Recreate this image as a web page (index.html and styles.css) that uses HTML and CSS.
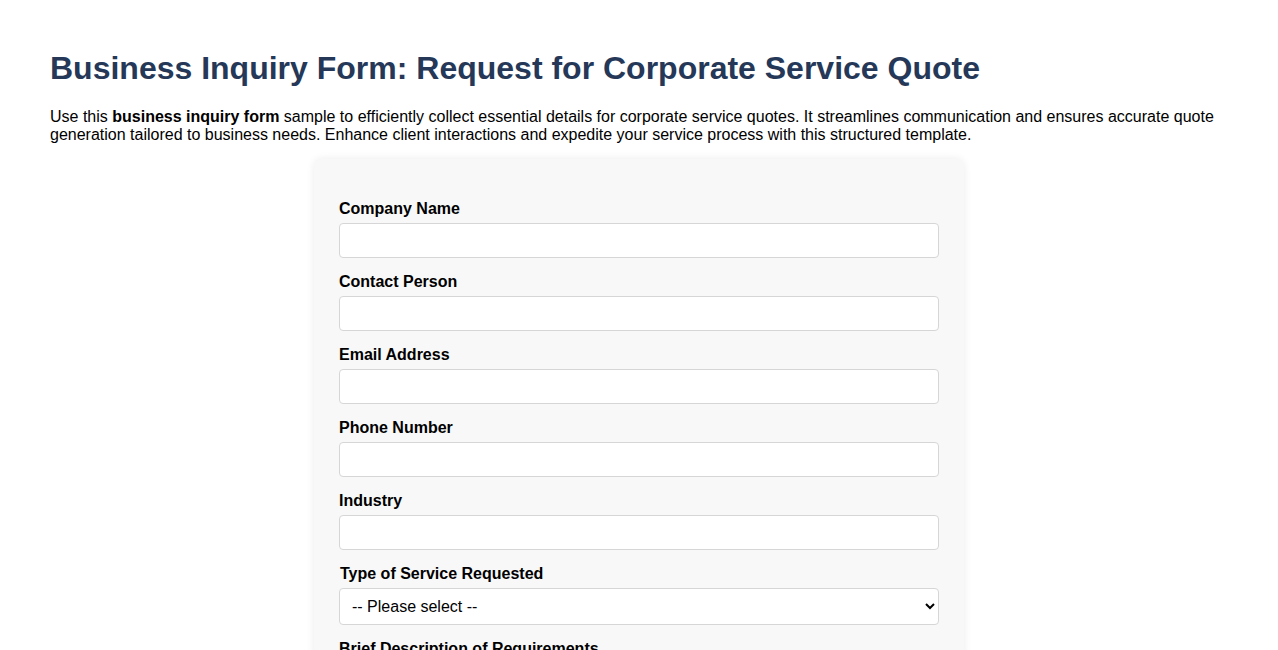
FILE: index.html
```html
<!DOCTYPE html>
<html lang="en">
<head>
<meta charset="utf-8">
<title>Business Inquiry Form</title>
<link rel="stylesheet" href="styles.css">
</head>
<body>
<main class="page">
  <h1 class="title">Business Inquiry Form: Request for Corporate Service Quote</h1>
  <p class="intro">Use this <strong>business inquiry form</strong> sample to efficiently collect essential details for corporate service quotes. It streamlines communication and ensures accurate quote generation tailored to business needs. Enhance client interactions and expedite your service process with this structured template.</p>
  <form class="card">
    <div class="field">
      <label class="label" for="company">Company Name</label>
      <input class="input" id="company" type="text">
    </div>
    <div class="field">
      <label class="label" for="contact">Contact Person</label>
      <input class="input" id="contact" type="text">
    </div>
    <div class="field">
      <label class="label" for="email">Email Address</label>
      <input class="input" id="email" type="email">
    </div>
    <div class="field">
      <label class="label" for="phone">Phone Number</label>
      <input class="input" id="phone" type="tel">
    </div>
    <div class="field">
      <label class="label" for="industry">Industry</label>
      <input class="input" id="industry" type="text">
    </div>
    <div class="field">
      <label class="label label-shift" for="service">Type of Service Requested</label>
      <select class="select" id="service">
        <option>-- Please select --</option>
        <option>Consulting</option>
        <option>IT Services</option>
        <option>Marketing</option>
      </select>
    </div>
    <div class="field">
      <label class="label" for="desc">Brief Description of Requirements</label>
      <textarea class="textarea" id="desc" rows="5"></textarea>
    </div>
  </form>
</main>
</body>
</html>
```

FILE: styles.css
```css
html, body {
  margin: 0;
  padding: 0;
  background: #ffffff;
}
body {
  font-family: "Liberation Sans", Arial, sans-serif;
  color: #000;
}
.page {
  padding: 50px 50px 40px;
}
.title {
  margin: 0 0 21px;
  font-size: 32px;
  line-height: 37px;
  font-weight: bold;
  color: #253858;
}
.intro {
  margin: 0 0 15px;
  font-size: 16px;
  line-height: 18px;
}
.card {
  width: 600px;
  margin: 0 auto;
  padding: 41px 25px 30px;
  background: #f8f8f8;
  border-radius: 8px;
  box-shadow: 0 0 8px rgba(0, 0, 0, 0.08);
  display: flex;
  flex-direction: column;
  gap: 15px;
}
.field {
  display: flex;
  flex-direction: column;
  gap: 5px;
}
.label {
  font-size: 16px;
  line-height: 18px;
  font-weight: bold;
}
.label-shift {
  padding-left: 1px;
}
.input, .select, .textarea {
  box-sizing: border-box;
  width: 100%;
  font-family: "Liberation Sans", Arial, sans-serif;
  font-size: 16px;
  background: #fff;
  border: 1px solid #d6d6d6;
  border-radius: 4px;
  padding: 8px 12px;
}
.input {
  height: 35px;
}
.select {
  height: 37px;
  padding: 8px 8px;
  color: #000;
}
.textarea {
  height: 100px;
  resize: vertical;
}
```
